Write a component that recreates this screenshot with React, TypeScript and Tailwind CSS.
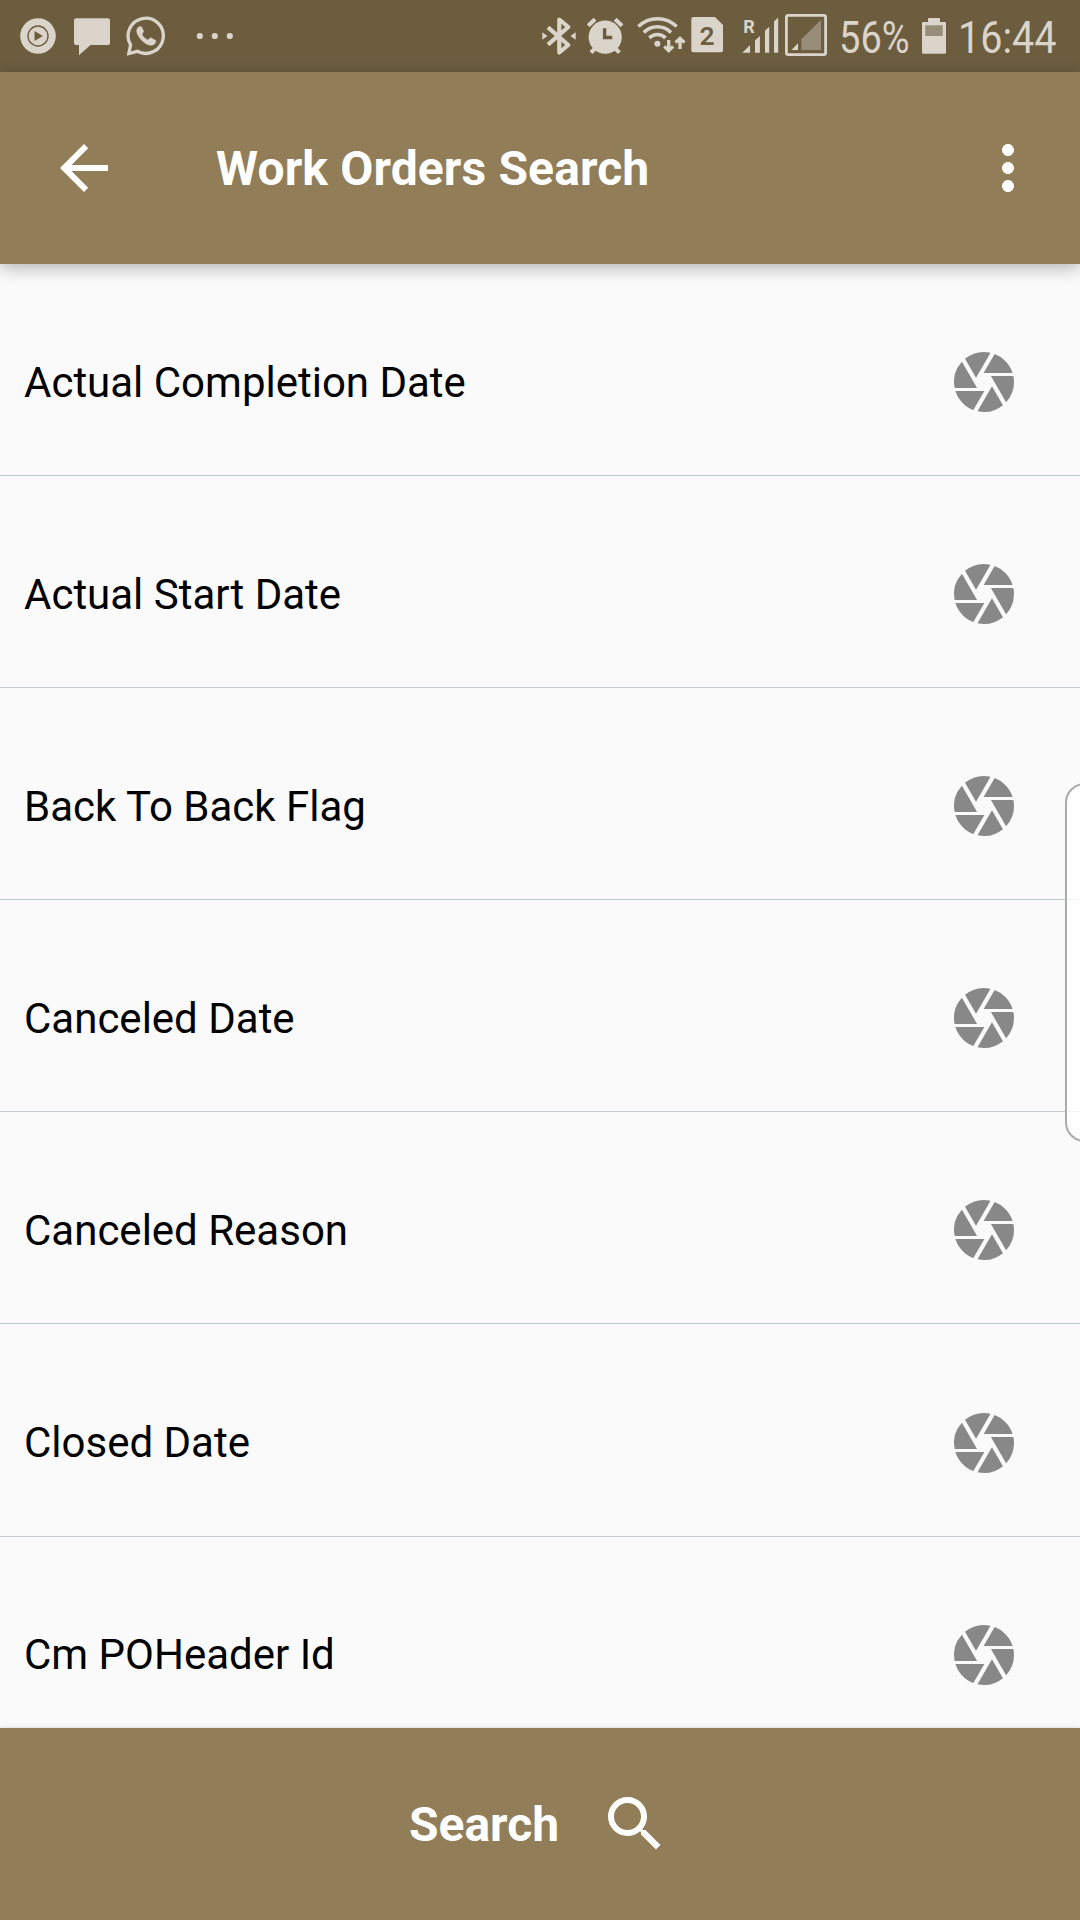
import React from "react";
import { MdArrowBack, MdCamera, MdMoreVert, MdSearch } from "react-icons/md";

const INK = "#dad4ca";
const BAR = "#6c5d3f";

const fields = [
  "Actual Completion Date",
  "Actual Start Date",
  "Back To Back Flag",
  "Canceled Date",
  "Canceled Reason",
  "Closed Date",
  "Cm POHeader Id",
];

function PlayIcon() {
  return (
    <svg className="ml-5 h-[72px] w-9 shrink-0" viewBox="20 0 36 72">
      <circle cx="38" cy="36" r="17.8" fill={INK} />
      <circle cx="38" cy="36" r="10" fill="none" stroke={BAR} strokeWidth="1.4" />
      <path d="M34.5 31v10l8.3-5z" fill={BAR} />
    </svg>
  );
}

function MessageIcon() {
  return (
    <svg className="ml-[18px] h-[72px] w-9 shrink-0" viewBox="74 0 36 72">
      <path d="M76 18.3h32a2 2 0 0 1 2 2V43a2 2 0 0 1-2 2H90.5L79 55.2V45h-3a2 2 0 0 1-2-2V20.300a2 2 0 0 1 2-2z" fill={INK} />
    </svg>
  );
}

function WhatsAppIcon() {
  return (
    <svg className="ml-4 h-[72px] w-10 shrink-0" viewBox="126 0 40 72">
      <path d="M130.600 44.800A17.600 17.600 0 1 1 137.400 51.300L128.800 53.500Z" fill="none" stroke={INK} strokeWidth="3.300" />
      <path d="M138.300 27.200c-1.700 1.300-2 3.800-1.100 6.200 2 5.500 8 11.300 13.600 11.900 2.700.1 4.800-1.600 5.200-4.600l-5.200-3c-1.300.4-2 1.900-3 2.200-2.500-1-4.800-3.200-5.800-5.500.3-1.300 1.500-2 1.600-3.400l-2.200-4.200c-.9-.5-2.100-.3-3.100.4z" fill={INK} stroke={INK} strokeWidth="0.500" />
    </svg>
  );
}

function MoreDots() {
  return (
    <svg className="ml-[30px] h-[72px] w-10 shrink-0" viewBox="196 0 40 72" fill={INK}>
      <circle cx="199.800" cy="36" r="3.100" />
      <circle cx="214.800" cy="36" r="3.100" />
      <circle cx="229.800" cy="36" r="3.100" />
    </svg>
  );
}

function BluetoothIcon() {
  return (
    <svg className="h-[72px] w-9 shrink-0" viewBox="541 0 36 72">
      <path d="M548 27.300 568.300 45 559.300 52.500V19.500L568.300 27 548 44.700" fill="none" stroke={INK} strokeWidth="4.200" strokeLinejoin="round" />
      <path d="M542.300 32.300v7.400L547.500 36zM575.700 32.300v7.400L570.500 36z" fill={INK} />
    </svg>
  );
}

function AlarmIcon() {
  return (
    <svg className="ml-2 h-[72px] w-10 shrink-0" viewBox="585 0 40 72">
      <circle cx="605.200" cy="37.200" r="16.600" fill={INK} />
      <path d="M588.200 25.800 595 19.300M622 25.800 615.200 19.300M591 52.700l5-5.200M619.400 52.700l-5-5.200" stroke={INK} strokeWidth="4" />
      <path d="M604.600 28.300v9.200h7.600" fill="none" stroke={BAR} strokeWidth="3.400" />
    </svg>
  );
}

function WifiIcon() {
  return (
    <svg className="ml-3 h-[72px] w-[50px] shrink-0" viewBox="637 0 50 72" fill="none" stroke={INK}>
      <path d="M638.400 26.600a27 27 0 0 1 38.200 0M643.800 32.400a19.200 19.200 0 0 1 27.200 0M649.300 37.900a11.500 11.500 0 0 1 16.200 0" strokeWidth="3.600" />
      <circle cx="657.400" cy="43.700" r="3" fill={INK} stroke="none" />
      <path d="M668.700 40v11M664.300 46.300l4.400 4.400 4.400-4.400M680 49V38M675.600 42.700 680 38.300l4.400 4.400" strokeWidth="3.300" />
    </svg>
  );
}

function SimIcon() {
  return (
    <svg className="ml-1 h-[72px] w-8 shrink-0" viewBox="691 0 32 72">
      <path d="M693.300 17H715l8 8v25.300a2 2 0 0 1-2 2h-27.700a2 2 0 0 1-2-2V19a2 2 0 0 1 2-2z" fill={INK} />
      <text x="707" y="45" textAnchor="middle" fontFamily="Roboto" fontWeight="600" fontSize="26.500" fill={BAR}>2</text>
    </svg>
  );
}

function SignalIcon() {
  return (
    <svg className="ml-[18px] h-[72px] w-[38px] shrink-0" viewBox="741 0 38 72" fill={INK}>
      <text x="743.200" y="32.700" fontFamily="Roboto" fontWeight="700" fontSize="18.500" textLength="11.500" lengthAdjust="spacingAndGlyphs">R</text>
      <path d="M742.300 52.800h7.800V45zM755 52.800V40.500l4.900-4.500v16.800zM765 52.800V30.800l4.200-4v26zM774 52.800V21.500l4.200-4v35.300z" />
    </svg>
  );
}

function BoxedSignalIcon() {
  return (
    <svg className="ml-[6px] h-[72px] w-[42px] shrink-0" viewBox="785 0 42 72">
      <rect x="786.400" y="15.400" width="39.200" height="39.200" rx="1.800" fill="none" stroke={INK} strokeWidth="2.800" />
      <path d="M791.500 50h6.500v-6.800z" fill={INK} />
      <path d="M801.400 50V39L821 20v30z" fill="#988d79" />
    </svg>
  );
}

function BatteryIcon() {
  return (
    <svg className="h-[72px] w-6 shrink-0" viewBox="922 0 24 72">
      <path d="M929 18h10a1 1 0 0 1 1 1v3h5a1 1 0 0 1 1 1v29.700a1 1 0 0 1-1 1h-22a1 1 0 0 1-1-1V23a1 1 0 0 1 1-1h5v-3a1 1 0 0 1 1-1z" fill={INK} />
      <rect x="925.300" y="25.300" width="17.400" height="10.700" fill="#988d79" />
    </svg>
  );
}

function StatusBar() {
  return (
    <div className="flex h-[72px] shrink-0 items-center bg-[#6c5d3f] text-[44.500px] leading-[72px] text-[#dad4ca]">
      <PlayIcon />
      <MessageIcon />
      <WhatsAppIcon />
      <MoreDots />
      <div className="ml-auto flex items-center">
        <BluetoothIcon />
        <AlarmIcon />
        <WifiIcon />
        <SimIcon />
        <SignalIcon />
        <BoxedSignalIcon />
        <div className="ml-3 w-[83px] pt-1">
          <span className="inline-block origin-left scale-x-[0.855]">56%</span>
        </div>
        <BatteryIcon />
        <div className="ml-3 w-[122px] pt-1">
          <span className="inline-block origin-left scale-x-[0.89]">16:44</span>
        </div>
      </div>
    </div>
  );
}

export default function App() {
  return (
    <div className="relative flex h-[1920px] w-[1080px] flex-col overflow-hidden bg-[#fafafa] font-['Roboto',sans-serif]">
      <StatusBar />
      <header className="z-10 flex h-48 shrink-0 items-center bg-[#917e58] px-9 pl-12 text-white shadow-[0_4px_16px_rgba(0,0,0,0.28)]">
        <MdArrowBack className="size-[72px]" />
        <h1 className="ml-24 pt-0.5 text-5xl font-bold tracking-[0.13px]">Work Orders Search</h1>
        <MdMoreVert className="ml-auto size-[72px]" />
      </header>
      <main className="min-h-0 flex-1 overflow-hidden">
        {fields.map((name) => (
          <div
            key={name}
            className="group flex h-[212px] items-center justify-between border-b border-[#c3cbcf] pt-6 pr-[60px] pl-6 nth-6:h-[213px] nth-6:pt-[25px]"
          >
            <span className="pt-0.5 text-[42px] text-black group-nth-[n+6]:pt-0">{name}</span>
            <MdCamera className="size-[72px] text-[#888888]" />
          </div>
        ))}
      </main>
      <footer className="z-10 flex h-48 shrink-0 items-center justify-center bg-[#917e58] text-white shadow-[0_0_4px_rgba(0,0,0,0.15)]">
        <span className="pt-0.5 text-5xl font-bold">Search</span>
        <MdSearch className="ml-10 size-[72px]" />
      </footer>
      <div className="absolute top-[783px] -right-6 h-[359px] w-[39px] rounded-[20px] border-2 border-[#aaaaaa] bg-white/80" />
    </div>
  );
}
